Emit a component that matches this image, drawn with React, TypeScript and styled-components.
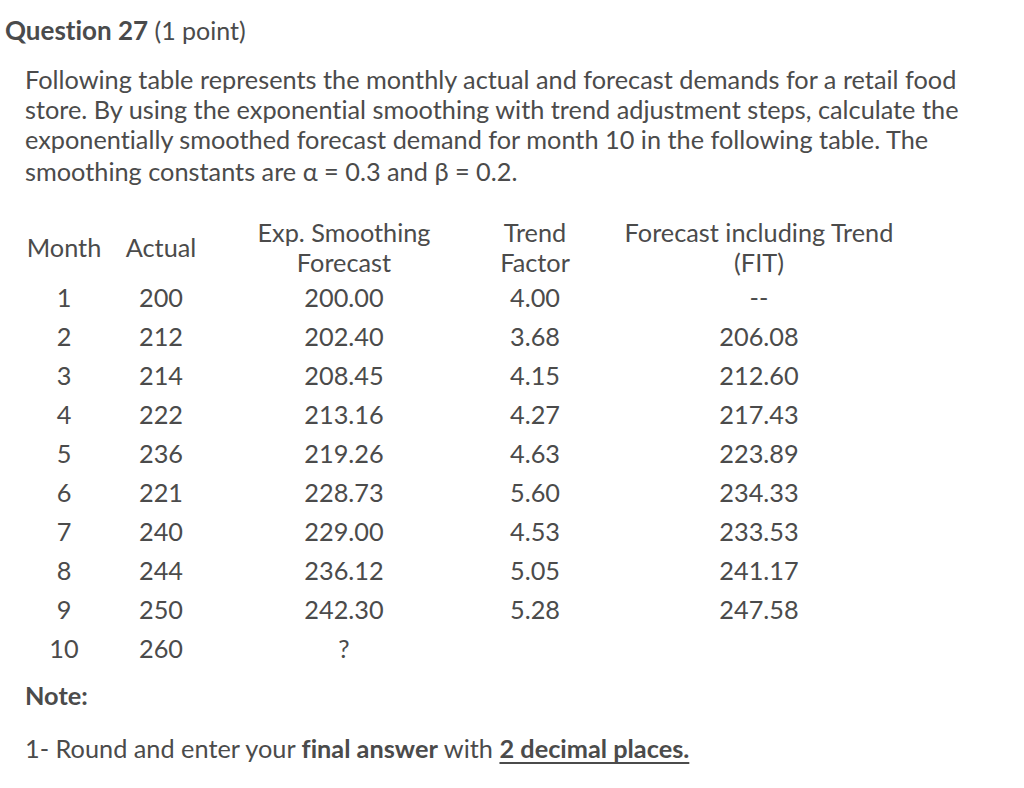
import React from "react";
import styled, { createGlobalStyle } from "styled-components";

const GlobalStyle = createGlobalStyle`
  html, body {
    margin: 0;
    padding: 0;
    background: #ffffff;
  }
  body {
    font-family: "Lato", "Noto Sans", sans-serif;
    color: #4b4b4b;
    font-variant-ligatures: none;
  }
`;

const Page = styled.div`
  width: 1024px;
  height: 788px;
  padding: 14px 0 0 5px;
  box-sizing: border-box;
`;

const Title = styled.h2`
  margin: 0;
  font-size: 26px;
  font-weight: 700;
  color: #4a4b4c;
  line-height: 32px;

  span {
    font-weight: 400;
    font-size: 25px;
  }
`;

const Body = styled.div`
  padding: 18px 0 0 20px;
  font-size: 25.3px;
  color: #4b4b4b;
`;

const Paragraph = styled.p`
  margin: 0;
  line-height: 30px;
  width: 970px;
`;

const LastLine = styled.p`
  margin: 2px 0 0;
  line-height: 30px;
`;

const Table = styled.table`
  border-collapse: collapse;
  margin-top: 29px;
  margin-left: -1px;
`;

const HeadCell = styled.th<{ $w: number }>`
  font-weight: 400;
  width: ${(p) => p.$w}px;
  text-align: center;
  line-height: 30px;
  padding: 2px 0 0;
  vertical-align: middle;
  white-space: nowrap;
`;

const Cell = styled.td`
  text-align: center;
  height: 39px;
  padding: 0;
  vertical-align: middle;
`;

const Note = styled.p`
  margin: 13px 0 0;
  font-weight: 700;
  line-height: 30px;
`;

const Instruction = styled.p`
  margin: 23px 0 0;
  line-height: 30px;

  b {
    font-weight: 700;
  }
  u {
    font-weight: 700;
    text-underline-offset: 4px;
  }
`;

const rows: [string, string, string, string, string][] = [
  ["1", "200", "200.00", "4.00", "--"],
  ["2", "212", "202.40", "3.68", "206.08"],
  ["3", "214", "208.45", "4.15", "212.60"],
  ["4", "222", "213.16", "4.27", "217.43"],
  ["5", "236", "219.26", "4.63", "223.89"],
  ["6", "221", "228.73", "5.60", "234.33"],
  ["7", "240", "229.00", "4.53", "233.53"],
  ["8", "244", "236.12", "5.05", "241.17"],
  ["9", "250", "242.30", "5.28", "247.58"],
  ["10", "260", "?", "", ""],
];

export default function App() {
  return (
    <>
      <GlobalStyle />
      <Page>
        <Title>
          Question 27 <span>(1 point)</span>
        </Title>
        <Body>
          <Paragraph>
            Following table represents the monthly actual and forecast demands
            for a retail food store. By using the exponential smoothing with
            trend adjustment steps, calculate the exponentially smoothed
            forecast demand for month 10 in the following table. The
          </Paragraph>
          <LastLine>smoothing constants are α = 0.3 and β = 0.2.</LastLine>
          <Table>
            <thead>
              <tr>
                <HeadCell $w={80}>Month</HeadCell>
                <HeadCell $w={114}>Actual</HeadCell>
                <HeadCell $w={252}>
                  Exp. Smoothing
                  <br />
                  Forecast
                </HeadCell>
                <HeadCell $w={130}>
                  Trend
                  <br />
                  Factor
                </HeadCell>
                <HeadCell $w={318}>
                  Forecast including Trend
                  <br />
                  (FIT)
                </HeadCell>
              </tr>
            </thead>
            <tbody>
              {rows.map((r) => (
                <tr key={r[0]}>
                  {r.map((v, i) => (
                    <Cell key={i}>{v}</Cell>
                  ))}
                </tr>
              ))}
            </tbody>
          </Table>
          <Note>Note:</Note>
          <Instruction>
            1- Round and enter your <b>final answer</b> with{" "}
            <u>2 decimal places.</u>
          </Instruction>
        </Body>
      </Page>
    </>
  );
}
